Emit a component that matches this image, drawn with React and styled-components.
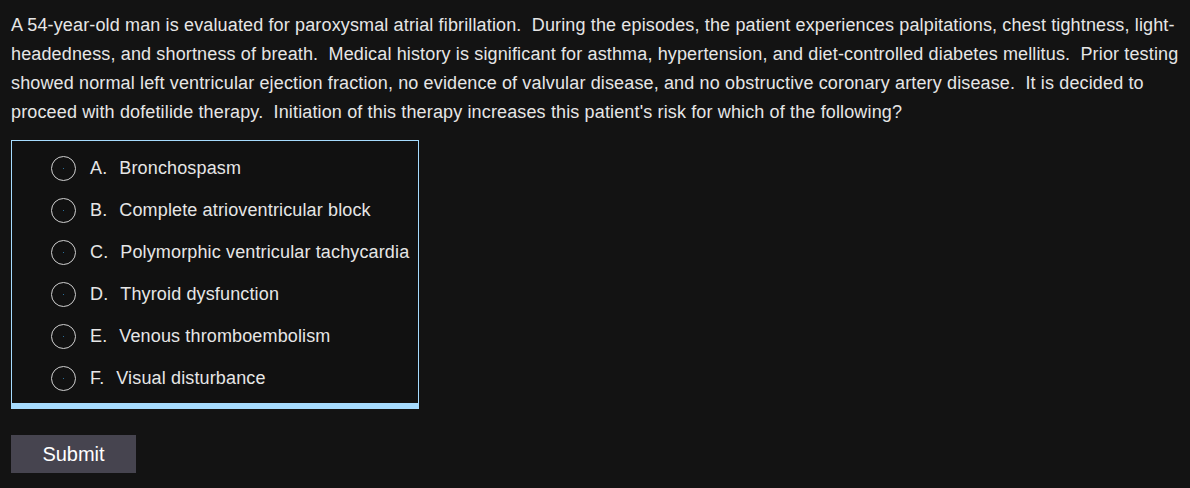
import React from "react";
import styled, { createGlobalStyle } from "styled-components";

const Global = createGlobalStyle`
  html, body { margin: 0; padding: 0; background: #131313; }
  body { font-family: "Liberation Sans", Arial, sans-serif; color: #e6e6e6; }
`;

const Page = styled.div`
  padding: 11px 4px 15px 11px;
  min-height: 488px;
  box-sizing: border-box;
`;

const Stem = styled.p`
  margin: 0;
  font-size: 18px;
  line-height: 29px;
  letter-spacing: 0.14px;
  white-space: pre-wrap;
`;

const Choices = styled.div`
  margin-top: 13px;
  width: 406px;
  border: 1px solid #a6dcff;
  border-bottom: 6px solid #a6dcff;
  padding: 6px 0 4px 0;
  background: #111111;
  display: flex;
  flex-direction: column;
`;

const Row = styled.label`
  display: flex;
  align-items: center;
  height: 42px;
  padding-left: 39px;
  font-size: 18px;
  letter-spacing: 0.14px;
  cursor: pointer;
`;

const Radio = styled.span`
  box-sizing: border-box;
  width: 25px;
  height: 25px;
  border-radius: 50%;
  border: 1.5px solid #cfcfcf;
  margin-right: 14px;
  flex: none;
  display: flex;
  align-items: center;
  justify-content: center;
  &::after {
    content: "";
    width: 1px;
    height: 1px;
    background: #2a6f9a;
  }
`;

const Letter = styled.span`
  margin-right: ${(p) => p.$gap}px;
`;

const Submit = styled.button`
  margin-top: 26px;
  width: 125px;
  height: 38px;
  border: none;
  background: #46444f;
  color: #ffffff;
  font-family: "Liberation Sans", Arial, sans-serif;
  font-size: 20px;
  padding: 0;
  cursor: pointer;
`;

const options = [
  ["A", "Bronchospasm", 12],
  ["B", "Complete atrioventricular block", 12],
  ["C", "Polymorphic ventricular tachycardia", 12],
  ["D", "Thyroid dysfunction", 12],
  ["E", "Venous thromboembolism", 12],
  ["F", "Visual disturbance", 12],
];

export default function App() {
  return (
    <>
      <Global />
      <Page>
        <Stem>
          {"A 54-year-old man is evaluated for paroxysmal atrial fibrillation.  During the episodes, the patient experiences palpitations, chest tightness, light-headedness, and shortness of breath.  Medical history is significant for asthma, hypertension, and diet-controlled diabetes mellitus.  Prior testing showed normal left ventricular ejection fraction, no evidence of valvular disease, and no obstructive coronary artery disease.  It is decided to proceed with dofetilide therapy.  Initiation of this therapy increases this patient's risk for which of the following?"}
        </Stem>
        <Choices>
          {options.map(([l, t, g]) => (
            <Row key={l}>
              <Radio />
              <Letter $gap={g}>{l}.</Letter>
              <span>{t}</span>
            </Row>
          ))}
        </Choices>
        <Submit>Submit</Submit>
      </Page>
    </>
  );
}
